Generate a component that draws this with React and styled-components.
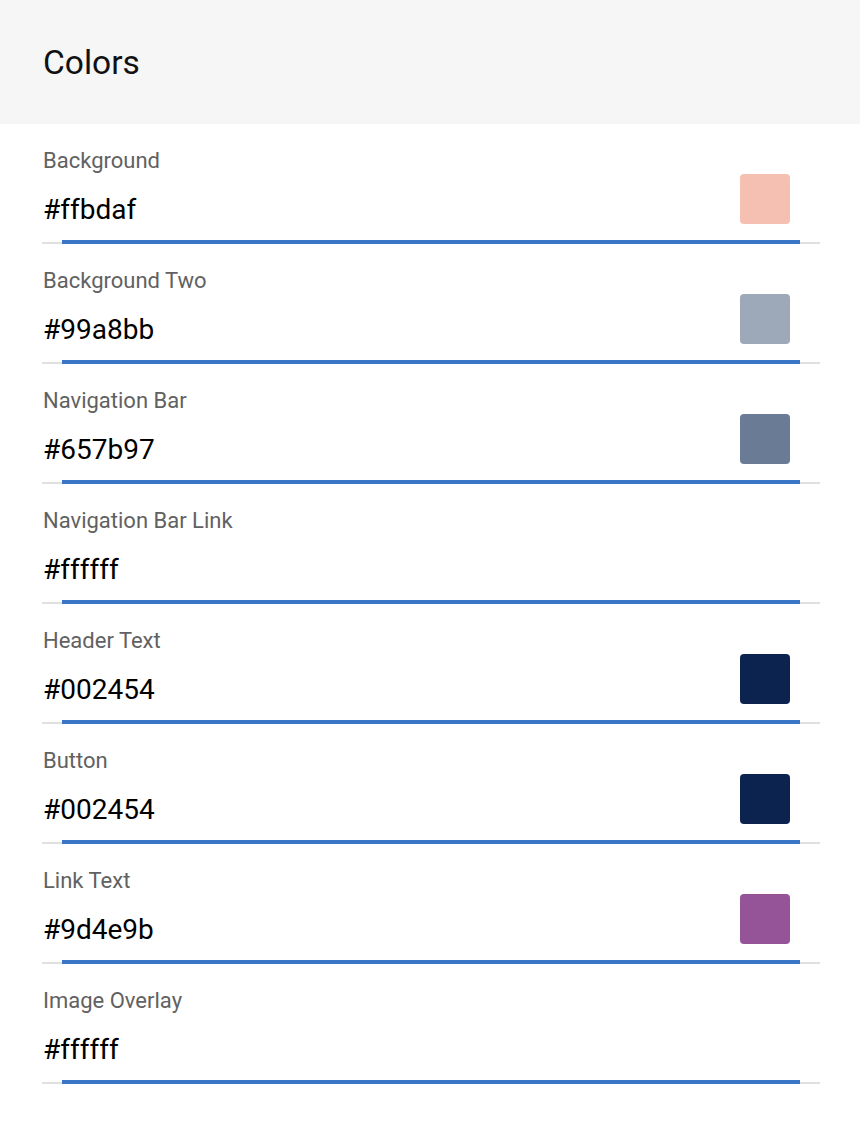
import React from "react";
import styled, { createGlobalStyle } from "styled-components";

const GlobalStyle = createGlobalStyle`
  html, body {
    margin: 0;
    padding: 0;
    background: #ffffff;
    font-family: Roboto, "Liberation Sans", Arial, sans-serif;
  }
`;

const Page = styled.div`
  width: 860px;
  display: flex;
  flex-direction: column;
`;

const Header = styled.header`
  height: 124px;
  background: #f6f6f6;
  display: flex;
  align-items: center;
  padding: 2px 43px 0;
  box-sizing: border-box;
`;

const Title = styled.h1`
  margin: 0;
  font-size: 33.5px;
  font-weight: 400;
  color: #111111;
  line-height: 40px;
`;

const List = styled.div`
  display: flex;
  flex-direction: column;
  padding: 0 40px 0 42px;
`;

const Field = styled.div`
  height: 120px;
  display: flex;
  flex-direction: column;
  padding-left: 1px;
`;

const Label = styled.label`
  margin-top: 25px;
  height: 23px;
  line-height: 24px;
  font-size: 22px;
  color: #616161;
`;

const InputRow = styled.div`
  height: 68px;
  display: flex;
  justify-content: space-between;
  align-items: flex-start;
`;

const Value = styled.div`
  padding-top: 22px;
  font-size: 28px;
  line-height: 32px;
  color: #000000;
`;

const Swatch = styled.div`
  width: 50px;
  height: 50px;
  margin-top: 2px;
  margin-right: 30px;
  border-radius: 4px;
  background: ${(p) => p.$color};
`;

const Underline = styled.div`
  position: relative;
  height: 4px;
  margin-left: -1px;

  &::before {
    content: "";
    position: absolute;
    left: 0;
    right: 0;
    bottom: 0;
    height: 2px;
    background: #e0e0e0;
  }

  &::after {
    content: "";
    position: absolute;
    left: 20px;
    right: 20px;
    bottom: 0;
    height: 4px;
    background: #3a75c8;
  }
`;

const colors = [
  { label: "Background", value: "#ffbdaf", swatch: "#f5c0b1" },
  { label: "Background Two", value: "#99a8bb", swatch: "#9da8b8" },
  { label: "Navigation Bar", value: "#657b97", swatch: "#697b95" },
  { label: "Navigation Bar Link", value: "#ffffff", swatch: "#ffffff" },
  { label: "Header Text", value: "#002454", swatch: "#0c2350" },
  { label: "Button", value: "#002454", swatch: "#0c2350" },
  { label: "Link Text", value: "#9d4e9b", swatch: "#955398" },
  { label: "Image Overlay", value: "#ffffff", swatch: "#ffffff" },
];

export default function App() {
  return (
    <>
      <GlobalStyle />
      <Page>
        <Header>
          <Title>Colors</Title>
        </Header>
        <List>
          {colors.map((c) => (
            <Field key={c.label}>
              <Label>{c.label}</Label>
              <InputRow>
                <Value>{c.value}</Value>
                <Swatch $color={c.swatch} />
              </InputRow>
              <Underline />
            </Field>
          ))}
        </List>
      </Page>
    </>
  );
}
